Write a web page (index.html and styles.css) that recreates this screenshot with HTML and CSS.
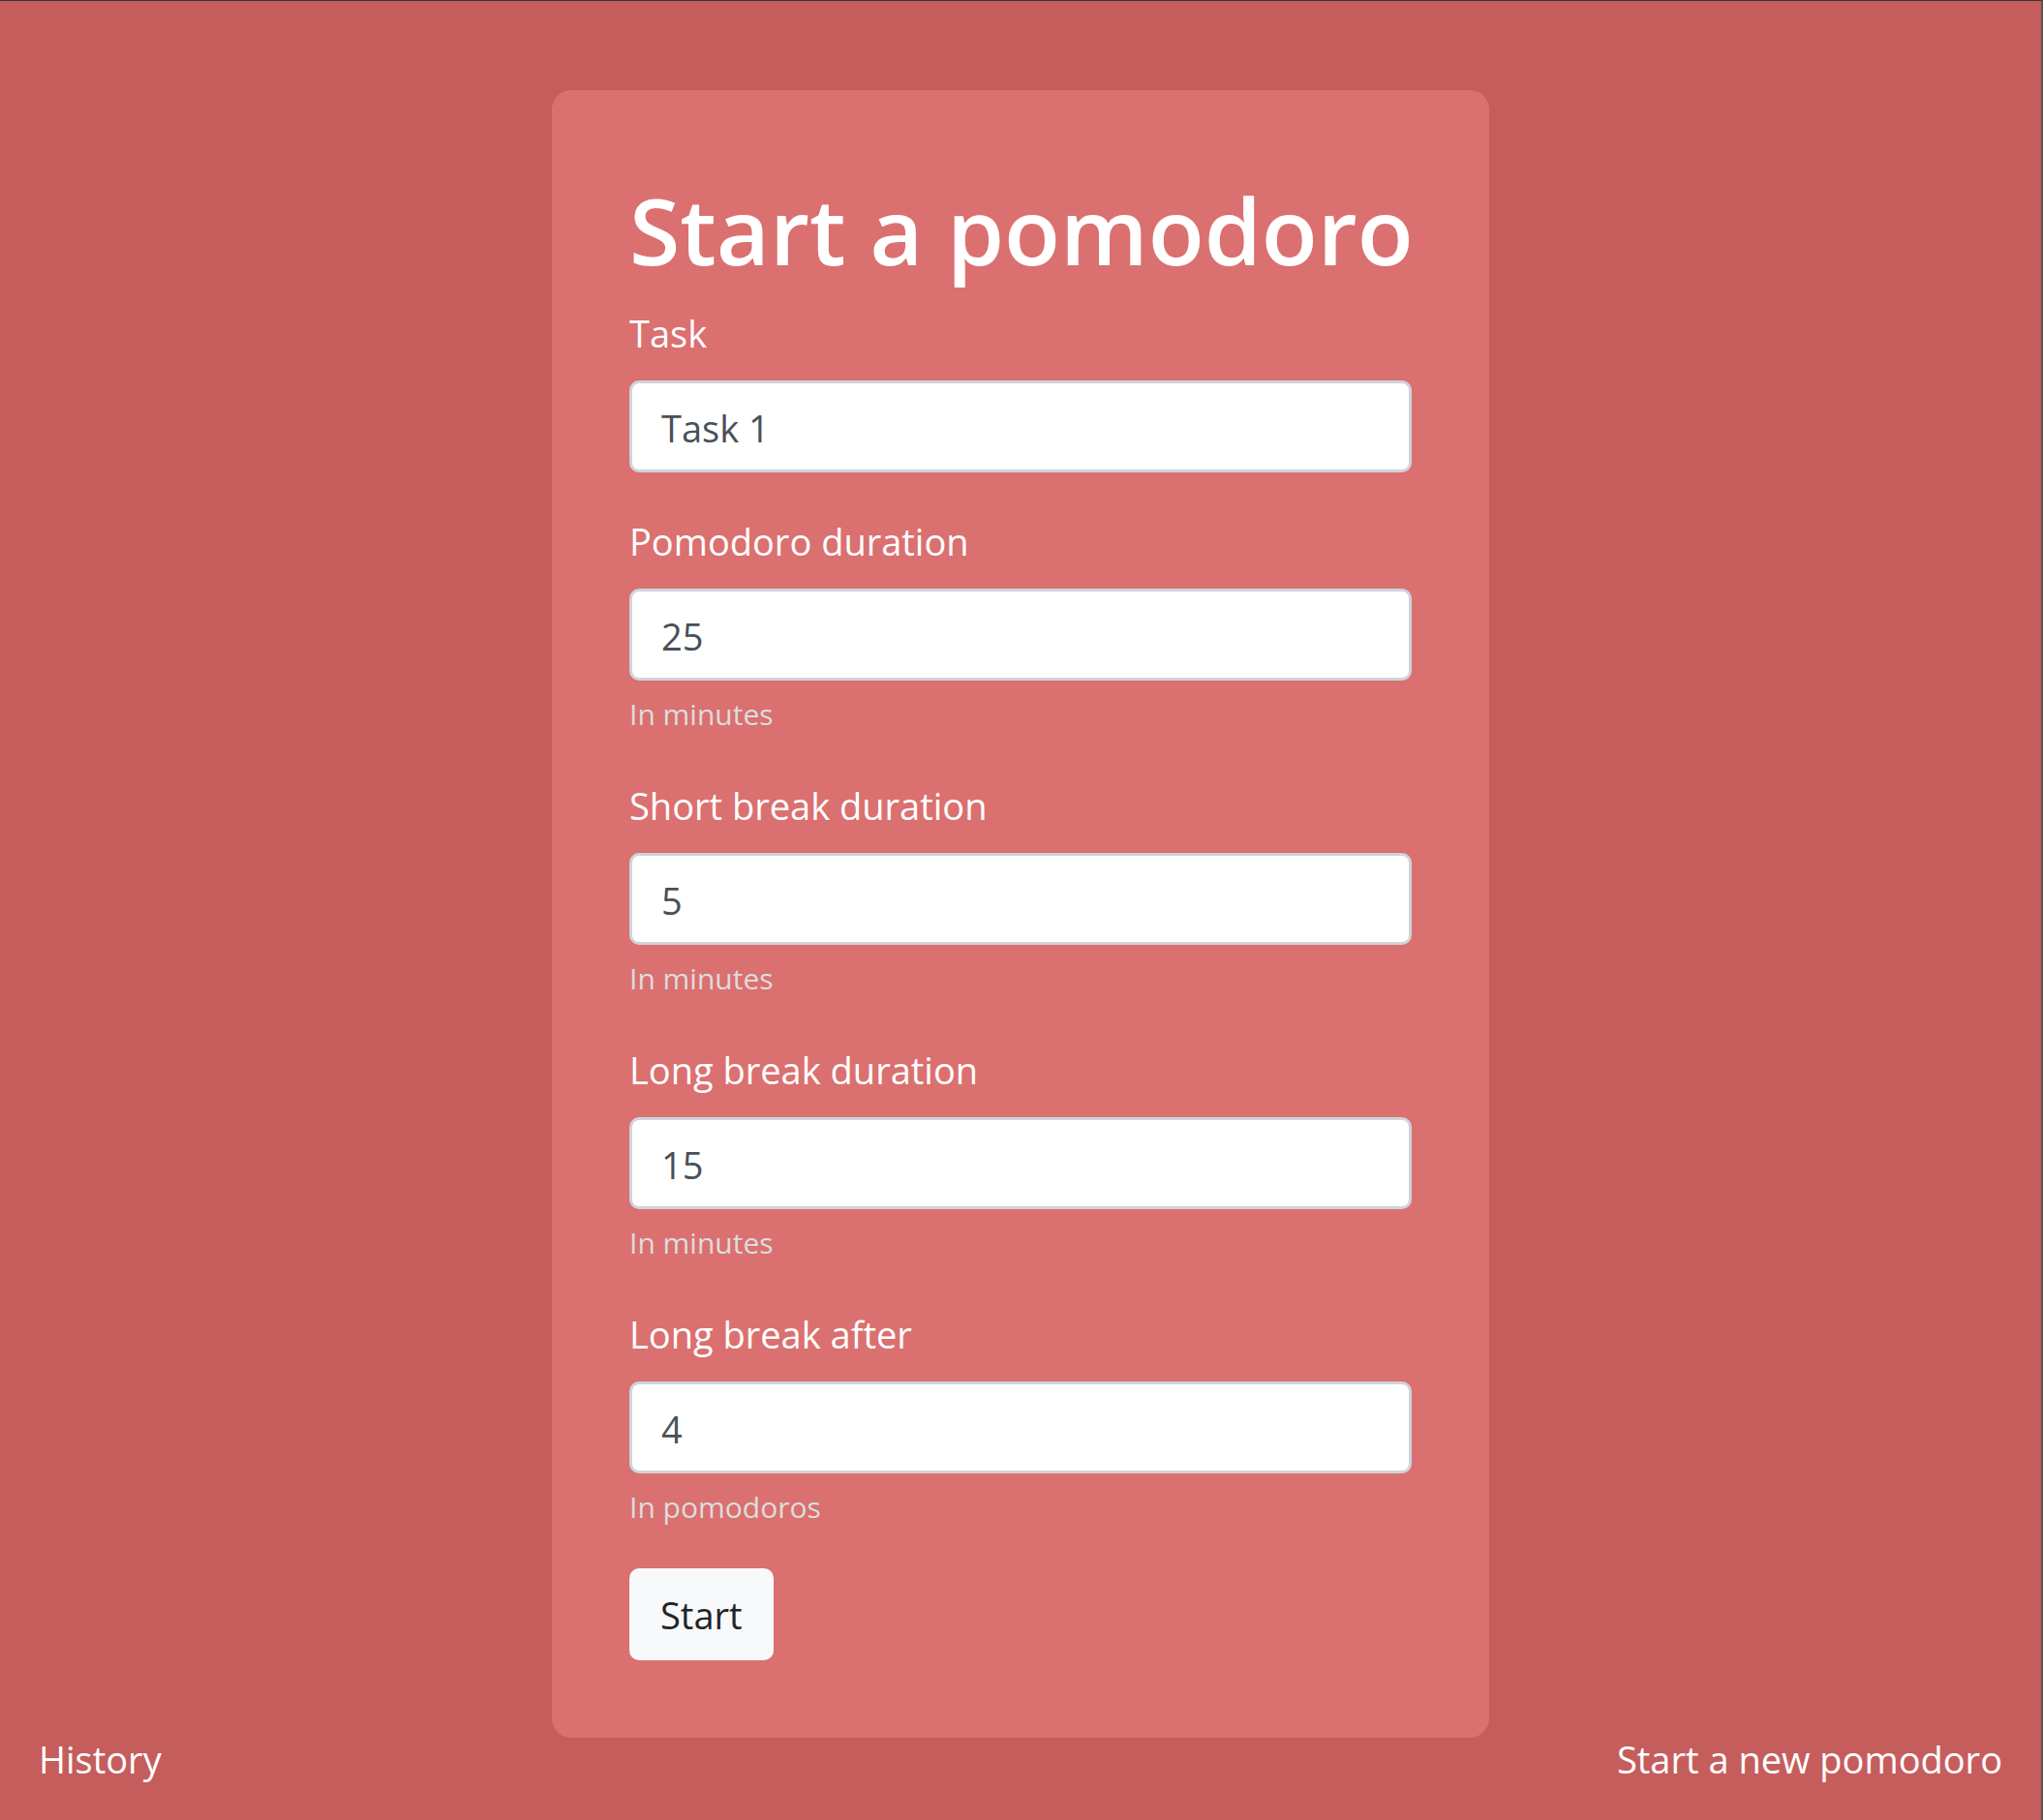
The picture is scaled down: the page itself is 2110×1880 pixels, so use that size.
FILE: index.html
```html
<!DOCTYPE html>
<html lang="en">
<head>
<meta charset="utf-8">
<meta name="viewport" content="width=device-width, initial-scale=1">
<title>Start a pomodoro</title>
<link rel="stylesheet" href="styles.css">
</head>
<body>
<div class="page">
  <main class="card">
    <h1 class="title">Start a pomodoro</h1>
    <form class="form">
      <div class="field">
        <label class="label" for="task">Task</label>
        <input class="input" id="task" type="text" value="Task 1">
      </div>
      <div class="field">
        <label class="label" for="pomodoro">Pomodoro duration</label>
        <input class="input" id="pomodoro" type="text" inputmode="numeric" value="25" aria-describedby="pomodoro-hint">
        <small class="hint" id="pomodoro-hint">In minutes</small>
      </div>
      <div class="field">
        <label class="label" for="short-break">Short break duration</label>
        <input class="input" id="short-break" type="text" inputmode="numeric" value="5" aria-describedby="short-hint">
        <small class="hint" id="short-hint">In minutes</small>
      </div>
      <div class="field">
        <label class="label" for="long-break">Long break duration</label>
        <input class="input" id="long-break" type="text" inputmode="numeric" value="15" aria-describedby="long-hint">
        <small class="hint" id="long-hint">In minutes</small>
      </div>
      <div class="field">
        <label class="label" for="long-after">Long break after</label>
        <input class="input" id="long-after" type="text" inputmode="numeric" value="4" aria-describedby="after-hint">
        <small class="hint" id="after-hint">In pomodoros</small>
      </div>
      <button class="button" type="submit">Start</button>
    </form>
  </main>
  <nav class="links">
    <a class="link" href="#history">History</a>
    <a class="link" href="#new">Start a new pomodoro</a>
  </nav>
</div>
</body>
</html>
```

FILE: styles.css
```css
* {
  box-sizing: border-box;
}

body {
  margin: 0;
  background: #c55d5d;
  color: #fff;
  font-family: "Segoe UI", "Open Sans", "Noto Sans", sans-serif;
  font-size: 38px;
  line-height: 62px;
}

.page {
  display: flex;
  flex-direction: column;
  min-height: 100vh;
  padding-top: 92px;
  border-top: 1px solid #333;
  border-right: 2px solid #555;
}

.card {
  align-self: center;
  width: 100%;
  max-width: 968px;
  padding: 80px;
  border-radius: 20px;
  background: #db7070;
}

.title {
  margin: 0 0 12px;
  font-size: 95px;
  font-weight: 600;
  line-height: 128px;
  white-space: nowrap;
}

.form {
  display: flex;
  flex-direction: column;
  align-items: flex-start;
  gap: 40px;
}

.field {
  display: flex;
  flex-direction: column;
  width: 100%;
}

.label {
  margin-bottom: 18px;
}

.input {
  width: 100%;
  height: 95px;
  padding: 2px 30px 0;
  border: 3px solid #ced4da;
  border-radius: 10px;
  background: #fff;
  color: #495057;
  font: inherit;
}

.hint {
  margin-top: 12px;
  color: #ddd;
  font-size: 30px;
  line-height: 46px;
}

.button {
  height: 95px;
  padding: 0 32px;
  border: 0;
  border-radius: 10px;
  background: #f8f9fa;
  color: #212529;
  font: inherit;
}

.links {
  display: flex;
  justify-content: space-between;
  padding: 0 40px 40px;
  line-height: 44px;
}

.link {
  color: #fff;
  text-decoration: none;
}
```
